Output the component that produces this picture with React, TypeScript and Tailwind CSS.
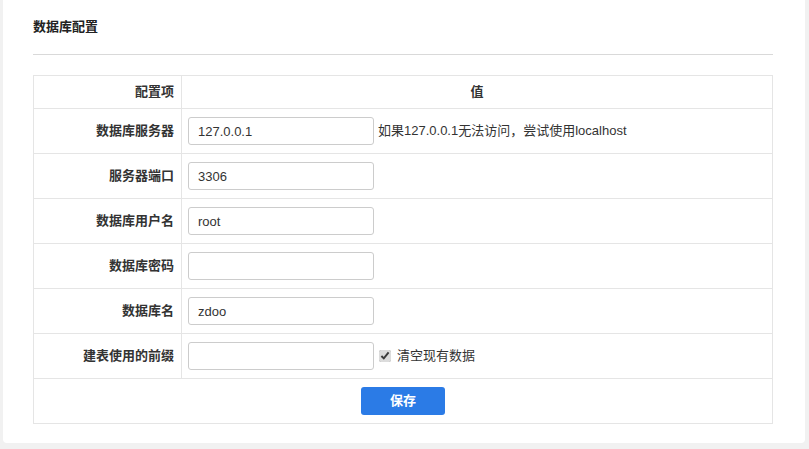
import { useState } from "react"

const font = { fontFamily: '"Liberation Sans", "Noto Sans CJK SC", sans-serif' }

type Row = { label: string; value: string; extra?: "hint" | "check" }

const rows: Row[] = [
  { label: "数据库服务器", value: "127.0.0.1", extra: "hint" },
  { label: "服务器端口", value: "3306" },
  { label: "数据库用户名", value: "root" },
  { label: "数据库密码", value: "" },
  { label: "数据库名", value: "zdoo" },
  { label: "建表使用的前缀", value: "", extra: "check" },
]

export default function App() {
  const [clear, setClear] = useState(true)

  return (
    <div className="w-[809px] h-[449px] bg-[#f1f1f1] pl-[3px] pr-[4px] text-[13px] text-[#333]" style={font}>
      <div className="h-[443px] bg-white rounded-b-[4px] px-[30px] pt-[18px]">
        <div className="w-[740px]">
          <h1 className="font-bold h-[18px] leading-[18px] text-[13px] text-[#222]">数据库配置</h1>
          <div className="mt-[18px] border-t border-[#d9d9d9]" />

          <table className="mt-[20px] w-full border-collapse border border-[#e5e5e5]">
            <thead>
              <tr className="h-[33px]">
                <th className="w-[148px] border border-[#e5e5e5] text-right pr-[7px] font-bold">配置项</th>
                <th className="border border-[#e5e5e5] text-center font-bold">值</th>
              </tr>
            </thead>
            <tbody>
              {rows.map((r) => (
                <tr key={r.label} className="h-[45px]">
                  <th className="border border-[#e5e5e5] text-right pr-[7px] font-bold">{r.label}</th>
                  <td className="border border-[#e5e5e5] pl-[6px]">
                    <div className="flex items-center">
                      <input
                        defaultValue={r.value}
                        className="w-[186px] h-[28px] border border-[#ccc] rounded-[3px] px-[9px] text-[13px] text-[#333] outline-none"
                        style={font}
                      />
                      {r.extra === "hint" && (
                        <span className="ml-[4px]">如果127.0.0.1无法访问，尝试使用localhost</span>
                      )}
                      {r.extra === "check" && (
                        <label className="ml-[5px] flex items-center gap-[6px]">
                          <input
                            type="checkbox"
                            checked={clear}
                            onChange={() => setClear(!clear)}
                            className="w-[12px] h-[12px] accent-[#dcdcdc]"
                          />
                          <span>清空现有数据</span>
                        </label>
                      )}
                    </div>
                  </td>
                </tr>
              ))}
              <tr className="h-[45px]">
                <td colSpan={2} className="border border-[#e5e5e5] text-center">
                  <button className="w-[84px] h-[28px] rounded-[3px] bg-[#2b7be6] text-white font-bold text-[13px]">
                    保存
                  </button>
                </td>
              </tr>
            </tbody>
          </table>
        </div>
      </div>
    </div>
  )
}
